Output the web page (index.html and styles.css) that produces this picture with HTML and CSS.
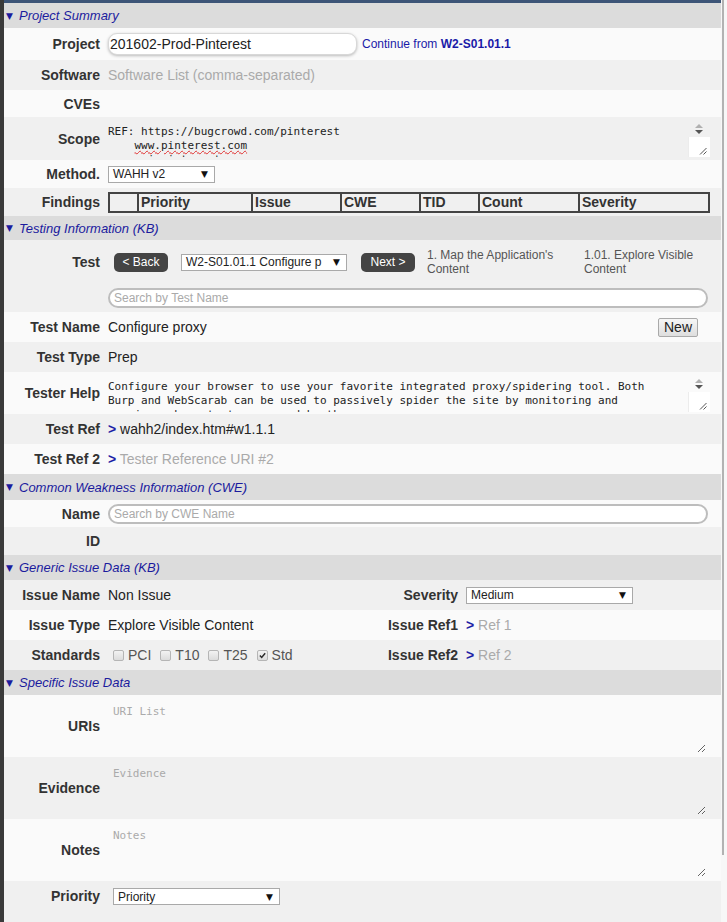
FILE: index.html
```html
<!DOCTYPE html>
<html>
<head>
<meta charset="utf-8">
<title>Project</title>
<link rel="stylesheet" href="styles.css">
</head>
<body>
<div class="frame">
  <div class="edge"></div>
  <div class="main">
    <div class="topbar"></div>

    <div class="sec h25"><span class="tri">▼</span>Project Summary</div>
    <div class="row l h32">
      <div class="lbl">Project</div>
      <div class="val flex">
        <div class="pinput">201602-Prod-Pinterest</div>
        <span class="cont">Continue from <b>W2-S01.01.1</b></span>
      </div>
    </div>
    <div class="row d h30">
      <div class="lbl">Software</div>
      <div class="val ph">Software List (comma-separated)</div>
    </div>
    <div class="row l h27">
      <div class="lbl">CVEs</div>
      <div class="val"></div>
    </div>
    <div class="row d h43">
      <div class="lbl">Scope</div>
      <div class="val">
        <div class="fta">
          <div class="fta-text"><div>REF: https://bugcrowd.com/pinterest</div><div>    <span class="spell">www.pinterest.com</span></div><div>    api.pinterest.com</div></div>
          <div class="fta-bar">
            <div class="fta-arrows"><span class="up"></span><span class="down"></span></div>
            <div class="fta-box"><svg class="grip" width="8" height="8" viewBox="0 0 8 8"><path d="M1 7.5 L7.5 1 M4.5 7.5 L7.5 4.5" stroke="#555" stroke-width="1"/></svg></div>
          </div>
        </div>
      </div>
    </div>
    <div class="row l h28">
      <div class="lbl">Method.</div>
      <div class="val">
        <div class="sel sel-method"><span>WAHH v2</span><span class="arr">▼</span></div>
      </div>
    </div>
    <div class="row d h28">
      <div class="lbl">Findings</div>
      <div class="val">
        <table class="findings">
          <colgroup>
            <col class="c-a"><col class="c-b"><col class="c-c"><col class="c-d"><col class="c-e"><col class="c-f"><col class="c-g">
          </colgroup>
          <tr><th></th><th>Priority</th><th>Issue</th><th>CWE</th><th>TID</th><th>Count</th><th>Severity</th></tr>
        </table>
      </div>
    </div>

    <div class="sec h24"><span class="tri">▼</span>Testing Information (KB)</div>
    <div class="row d h72 top">
      <div class="lbl lbl-test">Test</div>
      <div class="val">
        <div class="ctrls">
          <span class="btn back">&lt; Back</span>
          <div class="sel sel-test"><span>W2-S01.01.1 Configure p</span><span class="arr">▼</span></div>
          <span class="btn next">Next &gt;</span>
          <div class="crumb c1">1. Map the Application's<br>Content</div>
          <div class="crumb c2">1.01. Explore Visible<br>Content</div>
        </div>
        <div class="search test-search">Search by Test Name</div>
      </div>
    </div>
    <div class="row l h30">
      <div class="lbl">Test Name</div>
      <div class="val flex between">
        <span>Configure proxy</span>
        <span class="newbtn">New</span>
      </div>
    </div>
    <div class="row d h30">
      <div class="lbl">Test Type</div>
      <div class="val">Prep</div>
    </div>
    <div class="row l h42">
      <div class="lbl">Tester Help</div>
      <div class="val">
        <div class="fta">
          <div class="fta-text"><div>Configure your browser to use your favorite integrated proxy/spidering tool. Both</div><div>Burp and WebScarab can be used to passively spider the site by monitoring and</div><div>parsing web content processed by the proxy.</div></div>
          <div class="fta-bar">
            <div class="fta-arrows"><span class="up"></span><span class="down"></span></div>
            <div class="fta-box"><svg class="grip" width="8" height="8" viewBox="0 0 8 8"><path d="M1 7.5 L7.5 1 M4.5 7.5 L7.5 4.5" stroke="#555" stroke-width="1"/></svg></div>
          </div>
        </div>
      </div>
    </div>
    <div class="row d h30">
      <div class="lbl">Test Ref</div>
      <div class="val"><span class="gt">&gt;</span> wahh2/index.htm#w1.1.1</div>
    </div>
    <div class="row l h30">
      <div class="lbl">Test Ref 2</div>
      <div class="val"><span class="gt">&gt;</span> <span class="ph">Tester Reference URI #2</span></div>
    </div>

    <div class="sec h26"><span class="tri">▼</span>Common Weakness Information (CWE)</div>
    <div class="row l h27">
      <div class="lbl">Name</div>
      <div class="val"><div class="search">Search by CWE Name</div></div>
    </div>
    <div class="row d h28">
      <div class="lbl">ID</div>
      <div class="val"></div>
    </div>

    <div class="sec h25"><span class="tri">▼</span>Generic Issue Data (KB)</div>
    <div class="row2 d h30">
      <div class="lbl">Issue Name</div>
      <div class="val">Non Issue</div>
      <div class="lbl">Severity</div>
      <div class="val"><div class="sel sel-sev"><span>Medium</span><span class="arr">▼</span></div></div>
    </div>
    <div class="row2 l h30">
      <div class="lbl">Issue Type</div>
      <div class="val">Explore Visible Content</div>
      <div class="lbl">Issue Ref1</div>
      <div class="val"><span class="gt">&gt;</span> <span class="ph">Ref 1</span></div>
    </div>
    <div class="row2 d h30">
      <div class="lbl">Standards</div>
      <div class="val flex stds">
        <span class="std"><span class="cb"></span>PCI</span>
        <span class="std"><span class="cb"></span>T10</span>
        <span class="std"><span class="cb"></span>T25</span>
        <span class="std"><span class="cb"><svg width="11" height="11" viewBox="0 0 11 11"><path d="M2.3 5.6 L4.5 7.9 L8.8 2.8" fill="none" stroke="#2a2a2a" stroke-width="1.8"/></svg></span>Std</span>
      </div>
      <div class="lbl">Issue Ref2</div>
      <div class="val"><span class="gt">&gt;</span> <span class="ph">Ref 2</span></div>
    </div>

    <div class="sec h25"><span class="tri">▼</span>Specific Issue Data</div>
    <div class="row l h62">
      <div class="lbl">URIs</div>
      <div class="val"><textarea class="ta" placeholder="URI List"></textarea></div>
    </div>
    <div class="row d h62">
      <div class="lbl">Evidence</div>
      <div class="val"><textarea class="ta" placeholder="Evidence"></textarea></div>
    </div>
    <div class="row l h62">
      <div class="lbl">Notes</div>
      <div class="val"><textarea class="ta" placeholder="Notes"></textarea></div>
    </div>
    <div class="row d h41 top pri-row">
      <div class="lbl pri-lbl">Priority</div>
      <div class="val"><div class="sel sel-pri"><span>Priority</span><span class="arr">▼</span></div></div>
    </div>
  </div>
  <div class="scroll"><div class="thumb"></div></div>
</div>
</body>
</html>
```

FILE: styles.css
```css
* { box-sizing: border-box; }
html, body { margin: 0; padding: 0; }
body {
  font-family: "Liberation Sans", Arial, sans-serif;
  font-size: 14px;
  color: #222;
  background: #fff;
  width: 727px;
  height: 922px;
  overflow: hidden;
}
.frame { display: flex; height: 922px; }
.edge { width: 4px; flex: none; background: #3a3a3a; }
.main { flex: 1; min-width: 0; display: flex; flex-direction: column; }
.scroll { width: 6px; flex: none; background: #f7f7f7; display: flex; }
.scroll .thumb { width: 2px; height: 855px; margin-left: 1px; background: #b2b2b2; }
.topbar { height: 3px; flex: none; background: #3d5578; }

.sec {
  flex: none;
  display: flex;
  align-items: center;
  padding-left: 2px;
  background: #dcdcdc;
  color: #1b1b9e;
  font-size: 13px;
  font-style: italic;
}
.tri {
  width: 13px;
  font-style: normal;
  font-size: 9px;
  font-family: "DejaVu Sans", sans-serif;
  color: #1b1b9e;
}

.h24 { height: 24px; }
.h25 { height: 25px; }
.h26 { height: 26px; }
.h27 { height: 27px; }
.h28 { height: 28px; }
.h30 { height: 30px; }
.h32 { height: 32px; }
.h41 { height: 41px; }
.h42 { height: 42px; }
.h43 { height: 43px; }
.h62 { height: 62px; }
.h72 { height: 72px; }

.l { background: #fafafa; }
.d { background: #f0f0f0; }

.row {
  flex: none;
  display: grid;
  grid-template-columns: 96px 1fr;
  column-gap: 8px;
  align-items: center;
  padding-right: 13px;
}
.row2 {
  flex: none;
  display: grid;
  grid-template-columns: 96px 250px 92px 1fr;
  column-gap: 8px;
  align-items: center;
  padding-right: 13px;
}
.top { align-items: start; }
.lbl {
  text-align: right;
  font-weight: bold;
  color: #333;
  white-space: nowrap;
}
.val { min-width: 0; white-space: nowrap; }
.flex { display: flex; align-items: center; }
.between { justify-content: space-between; }
.ph { color: #aaa; }
.gt { color: #1d1da6; font-weight: bold; }

.pinput {
  width: 249px;
  height: 22px;
  line-height: 20px;
  padding-left: 1px;
  border: 1px solid #d8d8d8;
  border-radius: 9px;
  background: #fff;
  box-shadow: 0 1px 3px rgba(0,0,0,0.25);
}
.cont {
  margin-left: 5px;
  font-size: 12px;
  color: #1a1aa8;
}

/* fake scrolling textarea */
.fta { display: flex; height: 37px; margin-right: -2px; }
.fta-text {
  flex: 1;
  overflow: hidden;
  padding-top: 5px;
  font-family: "DejaVu Sans Mono", monospace;
  font-size: 11px;
  line-height: 14px;
  white-space: pre;
  color: #222;
}
.spell { text-decoration: underline wavy #e03030; text-decoration-thickness: 1px; }
.fta-bar { width: 22px; flex: none; display: flex; flex-direction: column; }
.fta-arrows {
  height: 17px;
  display: flex;
  flex-direction: column;
  align-items: center;
  padding-top: 4px;
  gap: 2px;
}
.up {
  width: 0; height: 0;
  border-left: 4px solid transparent;
  border-right: 4px solid transparent;
  border-bottom: 4px solid #b0b0b0;
}
.down {
  width: 0; height: 0;
  border-left: 4px solid transparent;
  border-right: 4px solid transparent;
  border-top: 4px solid #555;
}
.fta-box {
  flex: 1;
  background: #fff;
  border-left: 1px solid #ececec;
  display: flex;
  justify-content: flex-end;
  align-items: flex-end;
  padding: 0 3px 2px 0;
}
.grip { display: block; }

/* selects */
.sel {
  height: 17px;
  display: flex;
  align-items: center;
  justify-content: space-between;
  padding: 0 6px 0 4px;
  border: 1px solid #a9a9a9;
  background: #fff;
  font-size: 12px;
  color: #222;
}
.arr { font-family: "DejaVu Sans", sans-serif; font-size: 9px; color: #111; }
.sel-method { width: 107px; }
.sel-test { width: 166px; margin-left: 13px; }
.sel-sev { width: 167px; }
.sel-pri { width: 167px; margin-left: 5px; }

/* findings table */
.findings {
  width: 600px;
  table-layout: fixed;
  border-collapse: collapse;
  border: 2px solid #444;
}
.findings th {
  height: 19px;
  padding: 0 2px;
  border: 2px solid #444;
  text-align: left;
  font-size: 14px;
  font-weight: bold;
  color: #333;
  line-height: 15px;
}
.c-a { width: 29px; }
.c-b { width: 114px; }
.c-c { width: 89px; }
.c-d { width: 79px; }
.c-e { width: 59px; }
.c-f { width: 100px; }
.c-g { width: 130px; }

/* test controls */
.lbl-test { margin-top: 8px; line-height: 28px; }
.ctrls { display: flex; align-items: center; height: 28px; margin-top: 8px; }
.btn {
  width: 54px;
  height: 19px;
  line-height: 19px;
  text-align: center;
  border-radius: 5px;
  background: #444;
  color: #fff;
  font-size: 12px;
}
.back { margin-left: 6px; }
.next { margin-left: 14px; }
.crumb { font-size: 12px; line-height: 14px; color: #555; white-space: nowrap; }
.c1 { margin-left: 12px; width: 157px; }
.c2 { width: 124px; }

.search {
  height: 20px;
  line-height: 16px;
  padding-left: 4px;
  border: 2px solid #bdbdbd;
  border-radius: 10px;
  background: #fff;
  font-size: 12px;
  color: #aaa;
}
.test-search { margin-top: 12px; }

.newbtn {
  width: 40px;
  height: 19px;
  line-height: 17px;
  margin-right: 10px;
  text-align: center;
  border: 1px solid #a9a9a9;
  border-radius: 2px;
  background: linear-gradient(#f6f6f6, #dedede);
  font-size: 14px;
  color: #222;
}

/* checkboxes */
.stds { padding-left: 5px; color: #555; }
.std { display: flex; align-items: center; margin-right: 9px; }
.cb {
  width: 11px;
  height: 11px;
  margin-right: 4px;
  border: 1px solid #b5b5b5;
  border-radius: 2px;
  background: linear-gradient(#f2f2f2, #dcdcdc);
  display: flex;
  align-items: center;
  justify-content: center;
}
.cb svg { display: block; }

/* real textareas */
.ta {
  display: block;
  width: 598px;
  height: 53px;
  padding: 5px 5px;
  border: none;
  outline: none;
  background: transparent;
  resize: both;
  font-family: "DejaVu Sans Mono", monospace;
  font-size: 11px;
  line-height: 14px;
  color: #222;
}
.ta::placeholder { color: #aaa; }

/* priority row */
.pri-row { padding-top: 7px; }
.pri-lbl { line-height: 17px; }
```
